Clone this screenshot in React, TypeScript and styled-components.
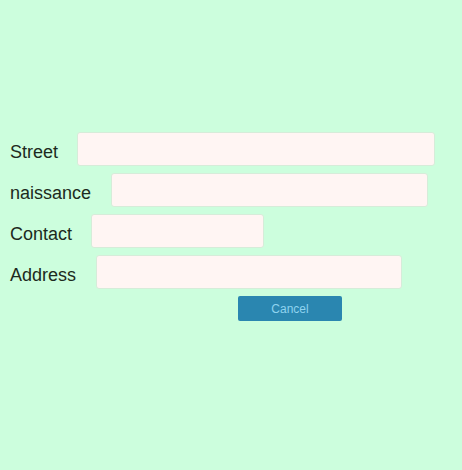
import React from "react";
import styled, { createGlobalStyle } from "styled-components";

const Global = createGlobalStyle`
  html, body { margin: 0; padding: 0; background: #ccfedd; }
  body { font-family: "Liberation Sans", Arial, sans-serif; }
`;

const Page = styled.div`
  min-height: 470px;
  box-sizing: border-box;
  padding: 132px 0 0 10px;
  display: flex;
  flex-direction: column;
  gap: 7px;
`;

const Row = styled.div`
  display: flex;
  align-items: center;
  height: 34px;
`;

const Label = styled.label<{ $gap: number }>`
  font-size: 18px;
  color: #1c2a20;
  padding-top: 6px;
  margin-right: ${(p) => p.$gap}px;
`;

const Input = styled.input<{ $w: number }>`
  box-sizing: border-box;
  width: ${(p) => p.$w}px;
  height: 34px;
  background: #fff5f3;
  border: 1px solid #d6ecd9;
  border-radius: 3px;
  outline: none;
`;

const Actions = styled.div`
  display: flex;
  padding-left: 228px;
`;

const Button = styled.button`
  width: 104px;
  height: 25px;
  background: #2a86b0;
  color: #8fd3ef;
  border: none;
  border-radius: 2px;
  font-family: "Liberation Sans", Arial, sans-serif;
  font-size: 12px;
  padding: 0;
`;

const rows = [
  { label: "Street", w: 358, gap: 19 },
  { label: "naissance", w: 317, gap: 20 },
  { label: "Contact", w: 173, gap: 19 },
  { label: "Address", w: 306, gap: 20 },
];

export default function App() {
  return (
    <>
      <Global />
      <Page>
        {rows.map((r) => (
          <Row key={r.label}>
            <Label $gap={r.gap}>{r.label}</Label>
            <Input $w={r.w} />
          </Row>
        ))}
        <Actions>
          <Button>Cancel</Button>
        </Actions>
      </Page>
    </>
  );
}
